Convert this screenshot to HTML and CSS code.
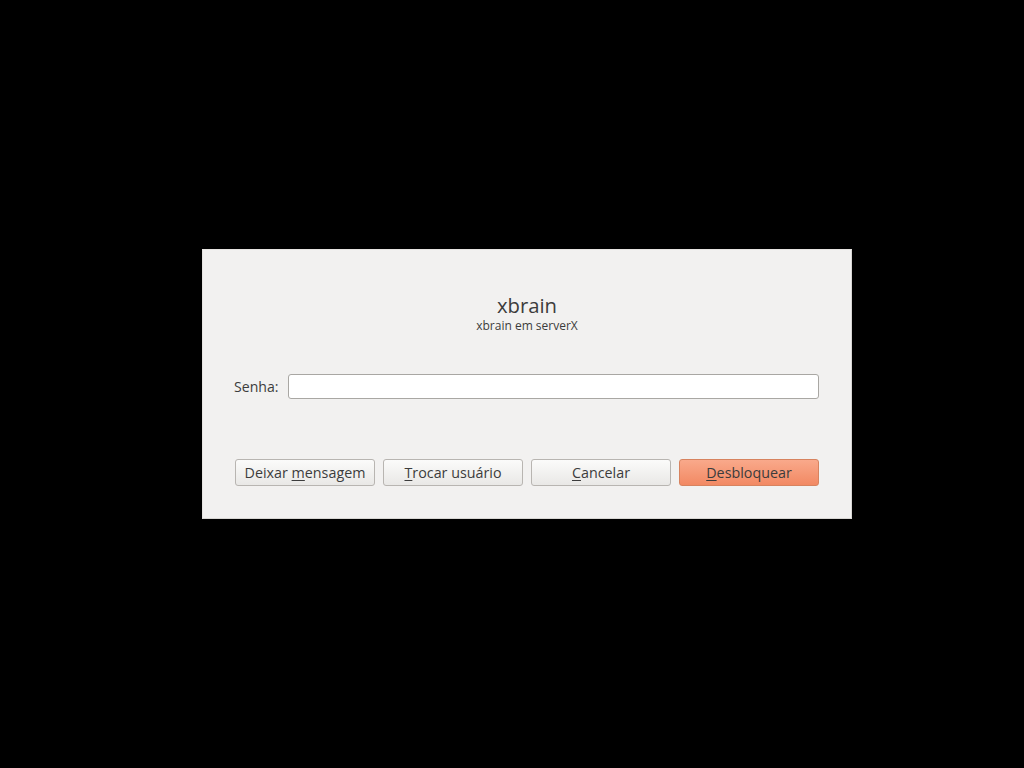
FILE: index.html
```html
<!DOCTYPE html>
<html lang="pt">
<head>
<meta charset="utf-8">
<title>Desbloquear</title>
<link rel="stylesheet" href="styles.css">
</head>
<body>
<div class="screen">
  <div class="dialog">
    <div class="header">
      <div class="title">xbrain</div>
      <div class="subtitle">xbrain em serverX</div>
    </div>
    <div class="field">
      <label class="label" for="pw">Senha:</label>
      <input class="input" id="pw" type="password">
    </div>
    <div class="buttons">
      <button class="btn">Deixar <u>m</u>ensagem</button>
      <button class="btn"><u>T</u>rocar usuário</button>
      <button class="btn"><u>C</u>ancelar</button>
      <button class="btn primary"><u>D</u>esbloquear</button>
    </div>
  </div>
</div>
</body>
</html>
```

FILE: styles.css
```css
html, body {
  margin: 0;
  padding: 0;
  background: #000;
  height: 100%;
}
body {
  font-family: "Open Sans", "DejaVu Sans", sans-serif;
  color: #3c3c3c;
}
.screen {
  height: 768px;
  display: flex;
  align-items: center;
  justify-content: center;
  padding-left: 30px;
  box-sizing: border-box;
}
.dialog {
  width: 650px;
  height: 270px;
  box-sizing: border-box;
  background: #f2f1f0;
  border: 1px solid #d8d6d3;
  border-left-color: #e6e4e1;
  border-top-color: #e6e4e1;
  padding: 0 32px;
  display: flex;
  flex-direction: column;
}
.header {
  margin-top: 43px;
  text-align: center;
}
.title {
  font-size: 20.3px;
  line-height: 25px;
  color: #3c3c3c;
}
.subtitle {
  font-size: 12px;
  line-height: 15px;
  color: #3c3c3c;
}
.field {
  margin-top: 41px;
  margin-left: -1px;
  display: flex;
  align-items: center;
  gap: 10px;
}
.label {
  font-size: 14.1px;
  color: #3c3c3c;
}
.input {
  flex: 1;
  height: 25px;
  box-sizing: border-box;
  border: 1px solid #a9a7a3;
  border-radius: 3px;
  background: #fff;
  margin: 0;
  padding: 0 6px;
  outline: none;
}
.buttons {
  margin-top: 60px;
  display: flex;
  gap: 8px;
}
.btn {
  width: 140px;
  height: 27px;
  box-sizing: border-box;
  border: 1px solid #b8b5b1;
  border-radius: 3px;
  background: linear-gradient(#fbfbfa, #e9e8e6);
  font-family: "Open Sans", "DejaVu Sans", sans-serif;
  font-size: 14.3px;
  color: #3c3c3c;
  padding: 0;
  margin: 0;
}
.btn u {
  text-decoration-thickness: 1px;
  text-underline-offset: 2px;
}
.primary {
  background: linear-gradient(#f9a98b, #f28963);
  border-color: #d7835f;
}
```
